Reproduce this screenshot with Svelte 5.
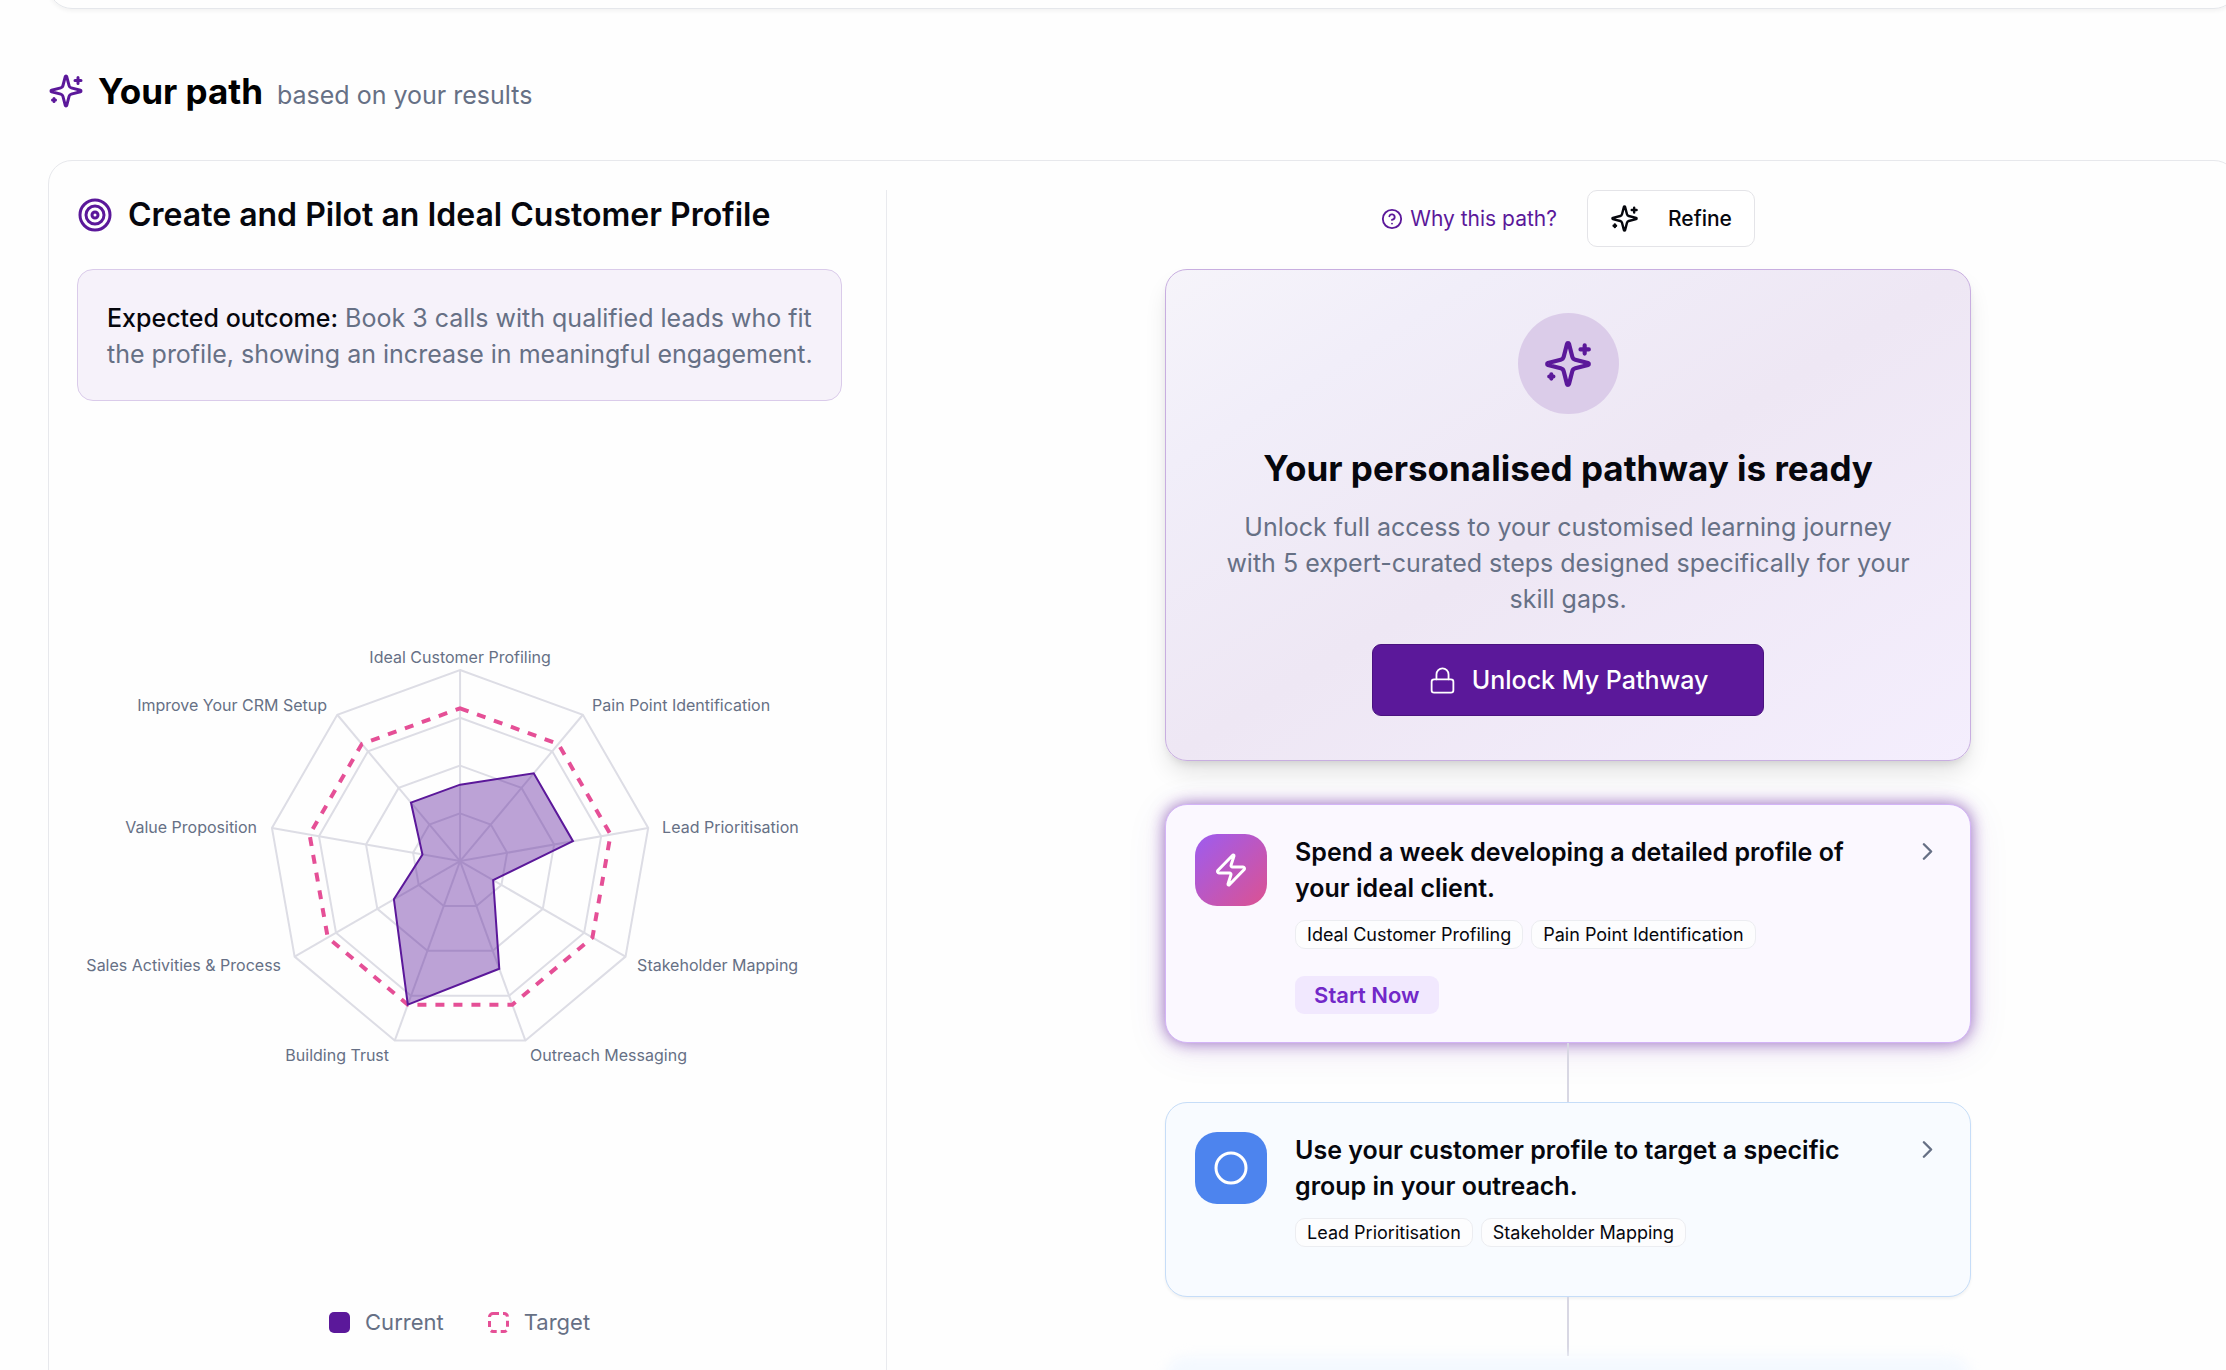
<script>
  const skills = [
    { name: 'Ideal Customer Profiling', current: 0.4, x: 383, y: 238, anchor: 'middle' },
    { name: 'Pain Point Identification', current: 0.6, x: 515, y: 286, anchor: 'start' },
    { name: 'Lead Prioritisation', current: 0.6, x: 585, y: 408, anchor: 'start' },
    { name: 'Stakeholder Mapping', current: 0.2, x: 560, y: 546, anchor: 'start' },
    { name: 'Outreach Messaging', current: 0.6, x: 453, y: 636, anchor: 'start' },
    { name: 'Building Trust', current: 0.8, x: 312, y: 636, anchor: 'end' },
    { name: 'Sales Activities & Process', current: 0.4, x: 204, y: 546, anchor: 'end' },
    { name: 'Value Proposition', current: 0.2, x: 180, y: 408, anchor: 'end' },
    { name: 'Improve Your CRM Setup', current: 0.4, x: 250, y: 286, anchor: 'end' }
  ];
  const cx = 383;
  const cy = 436;
  const radius = 191;

  function point(i, value) {
    const a = (i * 2 * Math.PI) / skills.length - Math.PI / 2;
    return [cx + Math.cos(a) * radius * value, cy + Math.sin(a) * radius * value];
  }
  const ring = (value) => skills.map((_, i) => point(i, value).join(',')).join(' ');
  const currentShape = skills.map((s, i) => point(i, s.current).join(',')).join(' ');

  const steps = [
    {
      title: 'Spend a week developing a detailed profile of your ideal client.',
      tags: ['Ideal Customer Profiling', 'Pain Point Identification'],
      active: true
    },
    {
      title: 'Use your customer profile to target a specific group in your outreach.',
      tags: ['Lead Prioritisation', 'Stakeholder Mapping'],
      active: false
    }
  ];
</script>

{#snippet sparkles()}
  <svg class="icon" viewBox="0 0 24 24" aria-hidden="true">
    <path d="M9.937 15.5A2 2 0 0 0 8.5 14.063l-6.135-1.582a.5.5 0 0 1 0-.962L8.5 9.936A2 2 0 0 0 9.937 8.5l1.582-6.135a.5.5 0 0 1 .963 0L14.063 8.5A2 2 0 0 0 15.5 9.937l6.135 1.581a.5.5 0 0 1 0 .964L15.5 14.063a2 2 0 0 0-1.437 1.437l-1.582 6.135a.5.5 0 0 1-.963 0z" />
    <path d="M20 3v4M22 5h-4M4 17v2M5 18H3" />
  </svg>
{/snippet}

<div class="page">
  <div class="previous"></div>

  <header class="heading">
    {@render sparkles()}
    <h1>Your path</h1>
    <p>based on your results</p>
  </header>

  <main class="panel">
    <section class="overview">
      <div class="goal">
        <svg class="icon" viewBox="0 0 24 24" aria-hidden="true">
          <circle cx="12" cy="12" r="10" /><circle cx="12" cy="12" r="6" /><circle cx="12" cy="12" r="2" />
        </svg>
        <h2>Create and Pilot an Ideal Customer Profile</h2>
      </div>
      <p class="outcome">
        <strong>Expected outcome:</strong> Book 3 calls with qualified leads who fit the profile, showing an increase in meaningful engagement.
      </p>

      <svg class="radar" viewBox="0 0 765 872" role="img" aria-label="Current and target skill levels">
        <g class="grid">
          {#each [0.25, 0.5, 0.75, 1] as level}
            <polygon points={ring(level)} />
          {/each}
          {#each skills as _, i}
            <line x1={cx} y1={cy} x2={point(i, 1)[0]} y2={point(i, 1)[1]} />
          {/each}
        </g>
        <polygon class="target" points={ring(0.8)} />
        <polygon class="current" points={currentShape} />
        {#each skills as s}
          <text x={s.x} y={s.y} text-anchor={s.anchor}>{s.name}</text>
        {/each}
      </svg>

      <ul class="legend">
        <li><span class="swatch solid"></span>Current</li>
        <li>
          <svg class="swatch" viewBox="0 0 21 21" aria-hidden="true">
            <rect x="1.5" y="1.5" width="18" height="18" rx="3.5" />
          </svg>Target
        </li>
      </ul>
    </section>

    <section class="pathway">
      <div class="column">
        <div class="actions">
          <button class="why" type="button">
            <svg class="icon" viewBox="0 0 24 24" aria-hidden="true">
              <circle cx="12" cy="12" r="10" /><path d="M9.09 9a3 3 0 0 1 5.83 1c0 2-3 3-3 3M12 17h.01" />
            </svg>
            Why this path?
          </button>
          <button class="refine" type="button">{@render sparkles()}Refine</button>
        </div>

        <div class="hero">
          <div class="badge">{@render sparkles()}</div>
          <h2>Your personalised pathway is ready</h2>
          <p>Unlock full access to your customised learning journey with 5 expert-curated steps designed specifically for your skill gaps.</p>
          <button class="unlock" type="button">
            <svg class="icon" viewBox="0 0 24 24" aria-hidden="true">
              <rect x="3" y="11" width="18" height="11" rx="2" /><path d="M7 11V7a5 5 0 0 1 10 0v4" />
            </svg>
            Unlock My Pathway
          </button>
        </div>

        {#each steps as step}
          <article class="step" class:active={step.active}>
            <div class="tile">
              <svg class="icon" viewBox="0 0 24 24" aria-hidden="true">
                {#if step.active}
                  <path d="M4 14a1 1 0 0 1-.78-1.63l9.9-10.2a.5.5 0 0 1 .86.46l-1.92 6.02A1 1 0 0 0 13 10h7a1 1 0 0 1 .78 1.63l-9.9 10.2a.5.5 0 0 1-.86-.46l1.92-6.02A1 1 0 0 0 11 14z" />
                {:else}
                  <circle cx="12" cy="12" r="10" />
                {/if}
              </svg>
            </div>
            <div class="body">
              <h3>{step.title}</h3>
              <ul class="tags">
                {#each step.tags as tag}<li>{tag}</li>{/each}
              </ul>
              {#if step.active}<button class="start" type="button">Start Now</button>{/if}
            </div>
            <svg class="icon chevron" viewBox="0 0 24 24" aria-hidden="true"><path d="m9 18 6-6-6-6" /></svg>
          </article>
          <div class="connector"></div>
        {/each}
        <div class="locked"></div>
      </div>
    </section>
  </main>
</div>

<style>
  :global(body) {
    background: #fefefe;
  }
  .page {
    box-sizing: border-box;
    height: 100vh;
    overflow: hidden;
    padding-left: 48px;
    font-family: Inter, 'Open Sans', sans-serif;
    font-size: 25px;
    line-height: 36px;
    color: #06070d;
  }
  .page * {
    box-sizing: border-box;
  }
  h1, h2, h3, p, ul {
    margin: 0;
    padding: 0;
  }
  ul {
    list-style: none;
  }
  button {
    font-family: inherit;
    color: inherit;
    cursor: pointer;
  }
  .icon {
    flex: none;
    display: block;
    width: 36px;
    height: 36px;
    fill: none;
    stroke: currentColor;
    stroke-width: 2;
    stroke-linecap: round;
    stroke-linejoin: round;
  }
  .previous {
    height: 60px;
    margin: -51px -12px 0 0;
    border: 1px solid #e5e7eb;
    border-radius: 24px;
    box-shadow: 0 2px 4px rgba(0, 0, 0, 0.05);
  }
  .heading {
    display: flex;
    align-items: center;
    gap: 14px;
    padding: 58px 0 45px;
  }
  .heading .icon, .goal .icon {
    color: #5b189a;
  }
  h1 {
    font-size: 35px;
    line-height: 48px;
    font-weight: 700;
    color: #000;
  }
  .heading p {
    padding-top: 8px;
    color: #667085;
  }
  .panel {
    display: flex;
    margin-right: -12px;
    padding: 29px 28px;
    border: 1px solid #e7e8ec;
    border-radius: 24px;
  }
  .overview {
    flex: none;
    width: 38%;
    padding-right: 44px;
    border-right: 1px solid #e9eaee;
  }
  .goal {
    display: flex;
    align-items: center;
    gap: 15px;
    height: 50px;
    margin-bottom: 29px;
  }
  .goal h2 {
    font-size: 32px;
    font-weight: 600;
    white-space: nowrap;
  }
  .outcome {
    padding: 30px 24px 28px 29px;
    border: 1px solid #dacbea;
    border-radius: 16px;
    background: #f6f2fa;
    color: #667085;
  }
  .outcome strong {
    font-weight: 500;
    color: #06070d;
  }
  .radar {
    display: block;
    width: 100%;
    margin: 24px 0 7px;
  }
  .radar text {
    font-size: 16px;
    fill: #667085;
  }
  .grid {
    fill: none;
    stroke: #dddde5;
    stroke-width: 2;
  }
  .target {
    fill: none;
    stroke: #e54f96;
    stroke-width: 4;
    stroke-dasharray: 9 9;
  }
  .current {
    fill: #5b189a;
    fill-opacity: 0.4;
    stroke: #5b189a;
    stroke-width: 2;
  }
  .legend {
    display: flex;
    justify-content: center;
    gap: 44px;
    font-size: 22px;
    color: #667085;
  }
  .legend li {
    display: flex;
    align-items: center;
    gap: 15px;
  }
  .swatch {
    width: 21px;
    height: 21px;
    fill: none;
    stroke: #e54f96;
    stroke-width: 3;
    stroke-dasharray: 6 4;
  }
  .solid {
    border-radius: 5px;
    background: #5b189a;
  }
  .pathway {
    flex: 1;
    display: flex;
    justify-content: center;
    padding-left: 40px;
  }
  .column {
    display: flex;
    flex-direction: column;
    align-items: center;
    width: 100%;
    max-width: 806px;
  }
  .actions {
    display: flex;
    align-items: center;
    gap: 30px;
    margin-bottom: 22px;
  }
  .why {
    display: flex;
    align-items: center;
    gap: 7px;
    padding: 0;
    border: 0;
    background: none;
    font-size: 21px;
    color: #5b189a;
  }
  .why .icon {
    width: 22px;
    height: 22px;
  }
  .refine {
    display: flex;
    align-items: center;
    gap: 29px;
    height: 57px;
    padding: 0 22px;
    border: 1px solid #e4e4e8;
    border-radius: 10px;
    background: #fff;
    font-size: 21px;
    font-weight: 500;
  }
  .refine .icon {
    width: 29px;
    height: 29px;
  }
  .hero {
    display: flex;
    flex-direction: column;
    align-items: center;
    width: 100%;
    margin-bottom: 43px;
    padding: 43px 56px 44px;
    border: 1px solid #c8aee0;
    border-radius: 22px;
    background: linear-gradient(to bottom right, #f6f4fa 0%, #f1eef9 20%, #eee7f4 50%, #f4eefd 100%);
    box-shadow: 0 14px 24px -4px rgba(0, 0, 0, 0.12), 0 5px 10px -4px rgba(0, 0, 0, 0.12);
    text-align: center;
  }
  .badge {
    display: grid;
    place-items: center;
    width: 101px;
    height: 101px;
    margin-bottom: 29px;
    border-radius: 50%;
    background: #dbcce9;
    color: #5b189a;
  }
  .badge .icon {
    width: 50px;
    height: 50px;
  }
  .hero h2 {
    margin-bottom: 16px;
    font-size: 35px;
    line-height: 50px;
    font-weight: 700;
  }
  .hero p {
    margin-bottom: 27px;
    color: #667085;
  }
  .unlock {
    display: flex;
    align-items: center;
    justify-content: center;
    gap: 15px;
    height: 72px;
    padding: 0 55px;
    border: 1px solid #4a127f;
    border-radius: 9px;
    background: #5b189a;
    font-size: 25px;
    font-weight: 500;
    color: #fff;
  }
  .unlock .icon {
    width: 29px;
    height: 29px;
    stroke-width: 1.5;
  }
  .step {
    display: flex;
    align-items: flex-start;
    width: 100%;
    min-height: 195px;
    padding: 29px 28px 28px 29px;
    border: 1px solid #c6ddf8;
    border-radius: 22px;
    background: #f8fbff;
    box-shadow: 0 2px 3px rgba(0, 0, 0, 0.05);
  }
  .step.active {
    border-color: #d3b4f7;
    background: #fbf8ff;
    box-shadow: 0 0 16px rgba(91, 24, 154, 0.6), 0 6px 40px rgba(91, 24, 154, 0.1);
  }
  .tile {
    flex: none;
    display: grid;
    place-items: center;
    width: 72px;
    height: 72px;
    border-radius: 22px;
    background: #4d84ee;
    color: #fff;
  }
  .active .tile {
    background: linear-gradient(to bottom right, #9d5cf0, #dc5291);
  }
  .body {
    flex: 1;
    min-width: 0;
    padding: 0 50px 0 28px;
  }
  h3 {
    font-size: 25px;
    font-weight: 600;
  }
  .tags {
    display: flex;
    flex-wrap: wrap;
    gap: 8px;
    margin-top: 14px;
  }
  .tags li {
    padding: 0 11px;
    border: 1px solid #ecedf1;
    border-radius: 10px;
    background: #fdfdfe;
    font-size: 18px;
    line-height: 27px;
  }
  .start {
    height: 38px;
    margin-top: 27px;
    padding: 0 19px;
    border: 0;
    border-radius: 9px;
    background: #f1e8fe;
    font-size: 22px;
    font-weight: 600;
    color: #7228c8;
    display: block;
  }
  .chevron {
    width: 29px;
    height: 29px;
    margin-top: 3px;
    color: #667085;
  }
  .connector {
    position: relative;
    width: 2px;
    height: 59px;
    background: #d8d7e3;
  }
  .locked {
    width: 100%;
    height: 195px;
    border-radius: 22px;
    background: #f4f9ff;
    filter: blur(6px);
  }
</style>
